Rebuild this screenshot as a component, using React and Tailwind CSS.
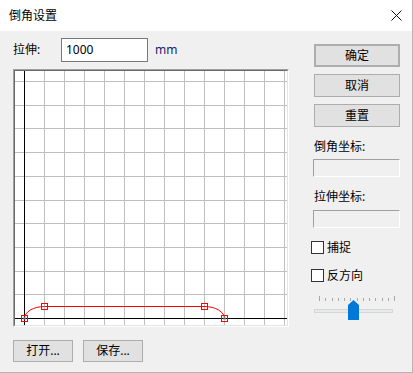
import React from "react";

const font = { fontFamily: '"Noto Sans", "Noto Sans CJK SC", sans-serif' };

// grid canvas, coordinates relative to the white interior
function Canvas() {
  const vx = Array.from({ length: 14 }, (_, i) => 9 + i * 20);
  const hy = Array.from({ length: 11 }, (_, i) => Math.round(10 + i * 23.7));
  const pts = [
    [9, 247],
    [29, 235],
    [189, 235],
    [209, 247],
  ];
  return (
    <svg width="272" height="254" className="block">
      <rect width="272" height="254" fill="#fff" />
      <g shapeRendering="crispEdges">
        {vx.slice(1).map((x) => (
          <line key={"v" + x} x1={x + 0.5} y1="0" x2={x + 0.5} y2="254" stroke="#bfbfbf" />
        ))}
        {hy.slice(0, 10).map((y) => (
          <line key={"h" + y} x1="0" y1={y + 0.5} x2="272" y2={y + 0.5} stroke="#bfbfbf" />
        ))}
        <line x1="9.5" y1="0" x2="9.5" y2="254" stroke="#000" />
        <line x1="0" y1="247.5" x2="272" y2="247.5" stroke="#000" />
      </g>
      <g fill="none" stroke="#ff0000" strokeWidth="1">
        <path d="M9.5 247.5 A20 12 0 0 1 29.5 235.5" />
        <line x1="29.5" y1="235.5" x2="189.5" y2="235.5" shapeRendering="crispEdges" />
        <path d="M189.5 235.5 A20 12 0 0 1 209.5 247.5" />
      </g>
      {pts.map(([x, y], i) => (
        <g key={i} shapeRendering="crispEdges">
          {(i === 0 || i === 3) && (
            <rect x={x - 1} y={y - 1} width="3" height="3" fill="#4fb8c0" fillOpacity="0.5" />
          )}
          <rect x={x - 2.5} y={y - 2.5} width="6" height="6" fill="none" stroke="#ff0000" />
        </g>
      ))}
    </svg>
  );
}

function Btn({ children, className = "" }) {
  return (
    <div
      className={`flex items-center justify-center bg-[#e1e1e1] border border-[#adadad] text-[12px] text-black ${className}`}
    >
      {children}
    </div>
  );
}

function Check({ label }) {
  return (
    <div className="flex items-center h-[17px] ml-[-3px]">
      <div className="w-[13px] h-[13px] border border-[#333] bg-white" />
      <span className="ml-[3px] text-[12px] leading-[17px]">{label}</span>
    </div>
  );
}

function Slider() {
  return (
    <div className="relative h-[25px] w-[86px]">
      <div className="flex justify-between items-end px-[5px] h-[5px]">
        {Array.from({ length: 13 }, (_, i) => (
          <div
            key={i}
            className={`w-px bg-[#a8a8a8] ${i === 0 || i === 12 ? "h-[5px]" : "h-[3px]"}`}
          />
        ))}
      </div>
      <div className="mt-[8px] w-[79px] h-[4px] bg-[#e7eaea] border border-[#d6d6d6]" />
      <svg width="11" height="20" className="absolute left-[34px] top-[4px]">
        <path d="M0 5 L5.5 0 L11 5 L11 20 L0 20 Z" fill="#0078d7" />
      </svg>
    </div>
  );
}

function Field() {
  return (
    <div className="w-[87px] h-[18px] bg-[#f0f0f0] border-t border-l border-[#a0a0a0] border-r-white border-b-white border-r border-b ml-[-1px]" />
  );
}

export default function App() {
  return (
    <div
      className="w-[413px] h-[373px] bg-[#f0f0f0] border-r border-b border-[#b5b5b5] flex flex-col text-black"
      style={font}
    >
      <div className="h-[31px] bg-white flex items-center justify-between pl-[9px] pr-[10px] shrink-0">
        <span className="text-[12px]">倒角设置</span>
        <svg width="11" height="11" viewBox="0 0 11 11">
          <path d="M0.5 0.5 L10.5 10.5 M10.5 0.5 L0.5 10.5" stroke="#111" strokeWidth="1" />
        </svg>
      </div>
      <div className="flex flex-1">
        <div className="w-[300px] pl-[13px]">
          <div className="mt-[7px] h-[24px] flex items-center">
            <span className="w-[48px] text-[12px]">拉伸:</span>
            <div className="w-[87px] h-[24px] bg-white border border-[#7a7a7a] flex items-center pl-[4px] text-[12px]">
              1000
            </div>
            <span className="ml-[7px] text-[12px] text-[#1c1c6e]">mm</span>
          </div>
          <div className="mt-[7px] w-[276px] border-t border-l border-[#a0a0a0] border-r border-b border-r-white border-b-white">
            <div className="border-t border-l border-[#696969] border-r border-b border-r-[#e3e3e3] border-b-[#e3e3e3]">
              <Canvas />
            </div>
          </div>
          <div className="mt-[13px] flex gap-[10px]">
            <Btn className="w-[60px] h-[22px]">打开...</Btn>
            <Btn className="w-[60px] h-[22px]">保存...</Btn>
          </div>
        </div>
        <div className="ml-[14px] w-[86px] flex flex-col">
          <Btn className="mt-[13px] h-[23px] border-2 border-[#0078d7]">确定</Btn>
          <Btn className="mt-[7px] h-[23px]">取消</Btn>
          <Btn className="mt-[7px] h-[23px]">重置</Btn>
          <span className="mt-[12px] text-[12px] leading-[16px]">倒角坐标:</span>
          <div className="mt-[4px]">
            <Field />
          </div>
          <span className="mt-[12px] text-[12px] leading-[16px]">拉伸坐标:</span>
          <div className="mt-[5px]">
            <Field />
          </div>
          <div className="mt-[11px]">
            <Check label="捕捉" />
          </div>
          <div className="mt-[11px]">
            <Check label="反方向" />
          </div>
          <div className="mt-[12px]">
            <Slider />
          </div>
        </div>
      </div>
    </div>
  );
}
